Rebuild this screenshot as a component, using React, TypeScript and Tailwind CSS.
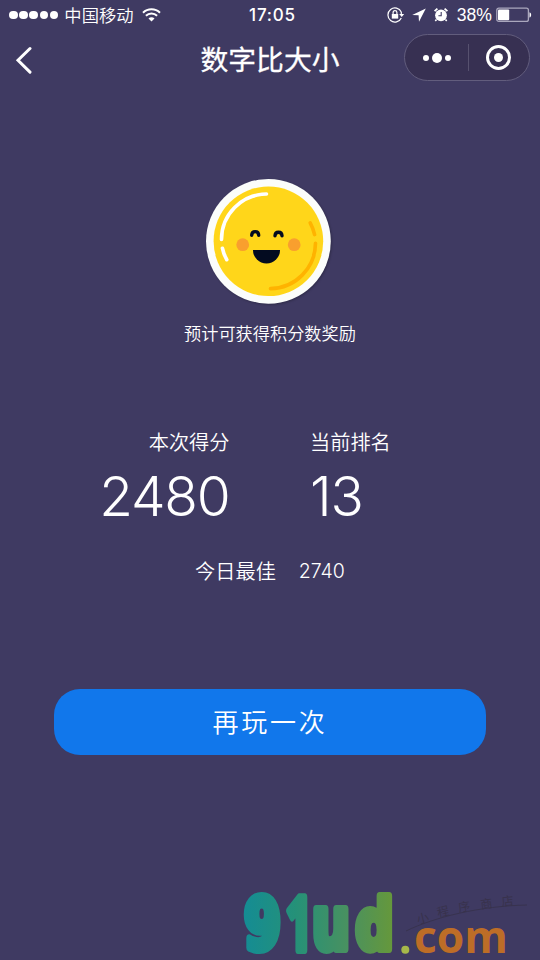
import type { ReactNode } from "react";

function StatusBar() {
  return (
    <div className="flex h-[30px] items-center justify-between pr-2 pl-[9px]">
      <div className="flex w-[200px] items-center">
        <div className="flex gap-[1.6px]">
          {[0, 1, 2, 3, 4].map((i) => (
            <span key={i} className="size-[8.6px] rounded-full bg-white" />
          ))}
        </div>
        <span className="ml-[6px] pt-px text-[17.3px] leading-none font-[350]">中国移动</span>
        <svg className="ml-[9px]" width="19" height="14" viewBox="0 0 19 14" fill="none" stroke="white">
          <path d="M1 4.7a12.2 12.2 0 0 1 17 0" strokeWidth="2" />
          <path d="M3.9 7.8a8 8 0 0 1 11.2 0" strokeWidth="2" />
          <path d="M9.5 13.5 6.5 10.4a4.2 4.2 0 0 1 6 0z" fill="white" stroke="none" />
        </svg>
      </div>
      <span className="pl-1 text-[17px] leading-none font-medium tracking-[0.8px]">17:05</span>
      <div className="flex w-[200px] items-center justify-end">
        <svg width="18" height="16" viewBox="0 0 18 16" fill="none" stroke="white">
          <path d="M14.3 5.1A7 7 0 1 0 14.3 10.9" strokeWidth="1.2" />
          <path d="M12.2 7h5L14.7 10z" fill="white" stroke="none" />
          <path d="M14.3 5v3" strokeWidth="1.2" />
          <rect x="4.8" y="7" width="6.4" height="4.6" fill="white" stroke="none" />
          <path d="M6.1 7.2V5.5a1.9 1.9 0 0 1 3.8 0v1.7" strokeWidth="1.2" />
        </svg>
        <svg className="ml-[7px]" width="14" height="14" viewBox="0 0 14 14" fill="white">
          <path d="M13.8.4.2 7l6.4.3.4 6.5z" />
        </svg>
        <svg className="ml-[7px]" width="16" height="16" viewBox="0 0 16 16">
          <circle cx="8" cy="8.3" r="5.9" fill="white" />
          <path d="M1.6 4.2 4.4 1.6M14.4 4.2 11.6 1.6" stroke="white" strokeWidth="1.8" />
          <path d="M3.5 12.6 2.3 14M12.5 12.6l1.2 1.4" stroke="white" strokeWidth="1.6" />
          <path d="M8.2 5v3.7H5.4" fill="none" stroke="#3f3a62" strokeWidth="1.1" />
        </svg>
        <span className="ml-[8px] pt-[2px] font-['Liberation_Sans'] text-[17.6px] leading-none">38%</span>
        <svg className="ml-[4px]" width="36" height="16" viewBox="0 0 36 16">
          <rect x=".8" y="1.2" width="31.6" height="13.2" rx="2" fill="none" stroke="#aaa7bd" strokeWidth="1.3" />
          <rect x="2" y="2.6" width="11.2" height="10.6" rx="1" fill="white" />
          <path d="M33.5 5.2c2.2.8 2.2 4.6 0 5.4z" fill="white" />
        </svg>
      </div>
    </div>
  );
}

function NavBar() {
  return (
    <div className="flex h-[60px] items-start justify-between pr-[10px] pl-[15px]">
      <button type="button" aria-label="返回" className="mt-[16px] flex w-[121px]">
        <svg width="18" height="28" viewBox="0 0 18 28" fill="none" stroke="white" strokeWidth="3">
          <path d="M15 2.5 3 14.3l12 11.8" strokeLinecap="round" />
        </svg>
      </button>
      <h1 className="mt-[15px] text-[27.8px] leading-[30px] font-normal [-webkit-text-stroke:0.3px_white]">数字比大小</h1>
      <div className="mt-[4px] flex h-[47px] w-[126px] items-center rounded-full border border-[#625d7d] bg-[#373052]">
        <button type="button" aria-label="更多" className="flex flex-1 items-center justify-center gap-[3px] pl-[2px]">
          <span className="size-[6px] rounded-full bg-white" />
          <span className="size-[10px] rounded-full bg-white" />
          <span className="size-[6px] rounded-full bg-white" />
        </button>
        <span className="h-[27px] w-px bg-[#57516f]" />
        <button type="button" aria-label="关闭" className="flex flex-1 justify-center">
          <span className="flex size-[25px] items-center justify-center rounded-full border-[3px] border-white">
            <span className="size-[9px] rounded-full bg-white" />
          </span>
        </button>
      </div>
    </div>
  );
}

function Coin() {
  return (
    <svg
      className="mt-[88px] ml-[205px] block drop-shadow-[1px_1px_1px_rgba(0,0,0,0.25)]"
      width="127"
      height="127"
      viewBox="205 178 127 127"
      fill="none"
      strokeLinecap="round"
    >
      <circle cx="268.4" cy="241.3" r="62.4" fill="#fbfdfb" />
      <circle cx="268.4" cy="241.3" r="54.8" fill="#ffd61a" />
      <g stroke="white" strokeWidth="3.6">
        <path d="M266.5 194A45.5 45.5 0 0 0 221.5 239.5" />
        <path d="M222.4 248.2q1.2 6.2 4.4 11.5" />
      </g>
      <g stroke="#ffb300" strokeWidth="3.6">
        <path d="M310.2 222.8q3.2 6 4.4 11.8" />
        <path d="M315.5 243.3A45.7 45.7 0 0 1 270.5 288.6" />
      </g>
      <circle cx="242.7" cy="244.7" r="6.4" fill="#f99f2e" />
      <circle cx="294.2" cy="244.7" r="6.4" fill="#f99f2e" />
      <g stroke="#030b20" strokeWidth="3.4">
        <path d="M251.7 235.2c.2-4.8 6.8-4.8 7 0" />
        <path d="M275 235.8c.2-4.8 6.8-4.8 7 0" />
      </g>
      <path d="M253 250h27a13.5 13.5 0 0 1-27 0z" fill="#030b20" />
    </svg>
  );
}

function Score({ label, value, className }: { label: string; value: ReactNode; className: string }) {
  return (
    <div className={className}>
      <div className="text-[20.2px] leading-[24px] font-[350]">{label}</div>
      <div className="mt-[11px] text-[55px] leading-[60px] font-[330] tracking-[-1.2px]">{value}</div>
    </div>
  );
}

function Watermark() {
  return (
    <svg className="ml-[235px] block" width="305" height="80" viewBox="235 880 305 80">
      <defs>
        <linearGradient id="brand" gradientUnits="userSpaceOnUse" x1="243" y1="0" x2="393" y2="0">
          <stop offset="0" stopColor="#148c94" />
          <stop offset=".35" stopColor="#259178" />
          <stop offset=".7" stopColor="#499160" />
          <stop offset="1" stopColor="#66983b" />
        </linearGradient>
      </defs>
      <g
        fontFamily="DejaVu Sans"
        fontWeight="700"
        fill="url(#brand)"
        stroke="url(#brand)"
        strokeWidth="8"
        strokeLinejoin="round"
      >
        <text x="244" y="949" fontSize="71" textLength="37" lengthAdjust="spacingAndGlyphs">9</text>
        <text x="286" y="950" fontSize="73" fontFamily="Open Sans" textLength="26" lengthAdjust="spacingAndGlyphs">1</text>
        <text x="312" y="949" fontSize="73" textLength="38" lengthAdjust="spacingAndGlyphs">u</text>
        <text x="355.5" y="949" fontSize="69" textLength="38" lengthAdjust="spacingAndGlyphs">d</text>
      </g>
      <circle cx="405.3" cy="949.7" r="4" fill="#a6b84a" />
      <text x="414" y="953.3" fontFamily="Open Sans" fontWeight="700" fontSize="45" fill="#bd6d27" textLength="94" lengthAdjust="spacingAndGlyphs">
        com
      </text>
      <path d="M406 931C435 917 480 906 527 905" fill="none" stroke="#38334f" strokeWidth="1" />
      <g fontFamily="Noto Sans CJK SC" fontWeight="400" fontSize="12" fill="#38324c">
        <text transform="translate(418 924) rotate(-14)">小</text>
        <text transform="translate(438 917) rotate(-12)">程</text>
        <text transform="translate(459 912) rotate(-10)">序</text>
        <text transform="translate(481 909) rotate(-8)">商</text>
        <text transform="translate(502 906) rotate(-6)">店</text>
      </g>
    </svg>
  );
}

export default function App() {
  return (
    <main className="flex h-[960px] w-[540px] flex-col overflow-hidden bg-[#3f3a62] font-['Inter','Noto_Sans_CJK_SC',sans-serif] text-white">
      <StatusBar />
      <NavBar />
      <Coin />
      <p className="mt-[17px] text-center text-[17.2px] leading-[24px] font-[350]">预计可获得积分数奖励</p>
      <div className="mt-[85px] flex">
        <Score label="本次得分" value="2480" className="w-[229.5px] text-right" />
        <Score label="当前排名" value="13" className="ml-[80.5px]" />
      </div>
      <div className="mt-[34px] flex h-[24px] items-center justify-center gap-[23px] text-[20.2px] font-[350]">
        <span>今日最佳</span>
        <span className="text-[19.5px]">2740</span>
      </div>
      <button
        type="button"
        className="mx-[54px] mt-[105px] h-[66px] shrink-0 rounded-[26px] bg-[#1177eb] text-[26px] font-[350] tracking-[2.8px]"
      >
        再玩一次
      </button>
      <div className="mt-auto">
        <Watermark />
      </div>
    </main>
  );
}
